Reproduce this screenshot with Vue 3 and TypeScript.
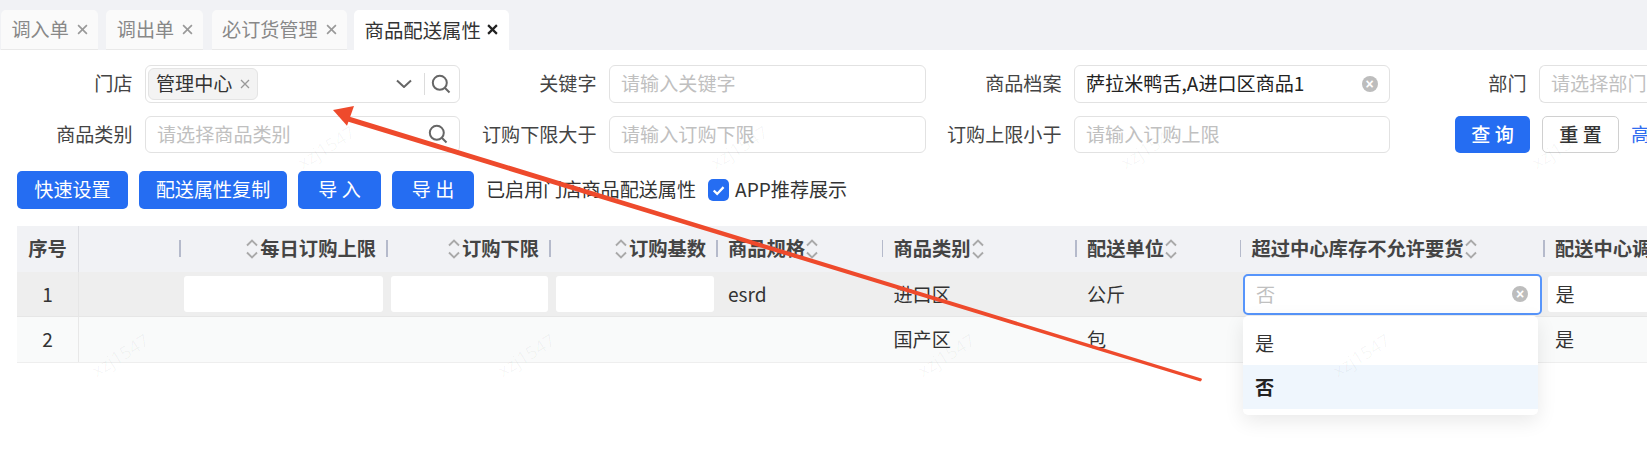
<script setup lang="ts">
interface Head { label: string; align?: 'right'; sort?: 'before' | 'after' }
const heads: Head[] = [
  { label: '每日订购上限', align: 'right', sort: 'before' },
  { label: '订购下限', align: 'right', sort: 'before' },
  { label: '订购基数', align: 'right', sort: 'before' },
  { label: '商品规格', sort: 'after' },
  { label: '商品类别', sort: 'after' },
  { label: '配送单位', sort: 'after' },
  { label: '超过中心库存不允许要货', sort: 'after' },
  { label: '配送中心调' },
]
const marks = [
  [326, 147], [739, 147], [1149, 147], [1560, 147],
  [120, 355], [526, 355], [946, 355], [1361, 355],
]
const tabs = ['调入单', '调出单', '必订货管理']
</script>

<template>
  <div class="page">
    <div class="tabs">
      <div v-for="t in tabs" :key="t" class="tab">
        {{ t }}
        <svg class="x" viewBox="0 0 10 10"><path d="m1 1 8 8M9 1 1 9" /></svg>
      </div>
      <div class="tab active">
        商品配送属性
        <svg class="x" viewBox="0 0 10 10"><path d="m1 1 8 8M9 1 1 9" /></svg>
      </div>
    </div>

    <div class="panel">
      <div class="form">
        <label class="lab">门店</label>
        <div class="field shop">
          <span class="tag">管理中心
            <svg class="tag-x" viewBox="0 0 10 10"><path d="m1 1 8 8M9 1 1 9" /></svg>
          </span>
          <svg class="chev" viewBox="0 0 16 9"><path d="M1 1.500 8 8l7-6.500" /></svg>
          <i class="sep"></i>
          <svg class="search" viewBox="0 0 20 20"><circle cx="8.800" cy="8.800" r="7" /><path d="m14 14 4.500 4.500" /></svg>
        </div>
        <label class="lab">关键字</label>
        <div class="field"><span class="ph">请输入关键字</span></div>
        <label class="lab">商品档案</label>
        <div class="field"><span class="val">萨拉米鸭舌,A进口区商品1</span><i class="clear">×</i></div>
        <label class="lab">部门</label>
        <div class="field open-right"><span class="ph">请选择部门</span></div>

        <label class="lab">商品类别</label>
        <div class="field"><span class="ph">请选择商品类别</span>
          <svg class="search end" viewBox="0 0 20 20"><circle cx="8.800" cy="8.800" r="7" /><path d="m14 14 4.500 4.500" /></svg>
        </div>
        <label class="lab">订购下限大于</label>
        <div class="field"><span class="ph">请输入订购下限</span></div>
        <label class="lab">订购上限小于</label>
        <div class="field"><span class="ph">请输入订购上限</span></div>
        <div class="query">
          <button class="btn primary q">查 询</button>
          <button class="btn plain">重 置</button>
          <a class="more">高</a>
        </div>
      </div>

      <div class="actions">
        <button class="btn primary w110">快速设置</button>
        <button class="btn primary w148">配送属性复制</button>
        <button class="btn primary w83">导 入</button>
        <button class="btn primary w82">导 出</button>
        <span class="enabled">已启用门店商品配送属性</span>
        <span class="check">
          <svg viewBox="0 0 22 22"><path d="m6 11.500 3.600 3.600L16.300 8" /></svg>
        </span>
        <span class="app">APP推荐展示</span>
      </div>

      <div class="table">
        <div class="th seq">序号</div>
        <div class="th fixed-end"></div>
        <div v-for="h in heads" :key="h.label" class="th" :class="{ right: h.align === 'right' }">
          <i class="bar"></i>
          <svg v-if="h.sort === 'before'" class="sort" viewBox="0 0 12 22"><path d="M1 7.500 6 2.500l5 5M1 14.500l5 5 5-5" /></svg>
          <span>{{ h.label }}</span>
          <svg v-if="h.sort === 'after'" class="sort" viewBox="0 0 12 22"><path d="M1 7.500 6 2.500l5 5M1 14.500l5 5 5-5" /></svg>
        </div>

        <div class="td seq r1">1</div>
        <div class="td r1 fixed-end"></div>
        <div class="td r1 edit"><i class="cell-input"></i></div>
        <div class="td r1 edit e2"><i class="cell-input"></i></div>
        <div class="td r1 edit e3"><i class="cell-input"></i></div>
        <div class="td r1 text">esrd</div>
        <div class="td r1 text">进口区</div>
        <div class="td r1 text">公斤</div>
        <div class="td r1 select-cell">
          <div class="focus-select"><span>否</span><i class="clear">×</i></div>
          <div class="menu">
            <div class="opt">是</div>
            <div class="opt on">否</div>
          </div>
        </div>
        <div class="td r1 edit last"><i class="cell-input">是</i></div>

        <div class="td seq r2">2</div>
        <div class="td r2 fixed-end"></div>
        <div class="td r2"></div>
        <div class="td r2"></div>
        <div class="td r2"></div>
        <div class="td r2"></div>
        <div class="td r2 text">国产区</div>
        <div class="td r2 text">包</div>
        <div class="td r2"></div>
        <div class="td r2 text">是</div>
      </div>
    </div>

    <span v-for="m in marks" :key="m[0]" class="mark" :style="{ left: m[0] + 'px', top: m[1] + 'px' }">xzj1547</span>

    <svg class="arrow" viewBox="0 0 1647 461">
      <path class="shaft" d="M345.700 115.400 344.300 120.600 1200.400 381.500Q1202.500 380 1201.500 378.500Z" />
      <path class="head" d="M333 110 354 106 347 125.700Z" />
    </svg>
  </div>
</template>

<style>
html, body { margin: 0; background: #fff; }
</style>

<style scoped>
.page {
  position: relative;
  width: 1647px;
  height: 461px;
  overflow: hidden;
  background: #fff;
  color: #333;
  font: 19.100px/1.3 "Noto Sans CJK SC", "Noto Sans", sans-serif;
}
.tabs {
  display: flex;
  gap: 8.500px;
  height: 39.500px;
  padding: 10px 0 0 1px;
  background: #f1f2f5;
}
.tab {
  display: flex;
  align-items: center;
  justify-content: center;
  gap: 8px;
  padding: 0 10px 0 10.500px;
  background: #fafafa;
  border-radius: 5px 5px 0 0;
  border-bottom: 1px solid #e9e9e9;
  color: #888;
}
.tab .x {
  width: 11px;
  height: 11px;
  fill: none;
  stroke: #999;
  stroke-width: 1.500;
}
.tab.active {
  gap: 6px;
  margin-left: -1.500px;
  background: #fff;
  border-bottom: 0;
  color: #333;
  font-size: 19.400px;
  padding: 0 11px;
}
.tab.active .x { stroke: #222; stroke-width: 2; }
.panel { padding-top: 15.500px; }
.form {
  display: grid;
  grid-template-columns: 145px 315px 149px 316.500px 148.500px 315.500px 149.500px 200px;
  grid-auto-rows: 37.500px;
  row-gap: 13px;
}
.lab {
  display: flex;
  align-items: center;
  justify-content: flex-end;
  padding-right: 12.500px;
  color: #444;
  white-space: nowrap;
}
.field {
  box-sizing: border-box;
  display: flex;
  align-items: center;
  padding: 0 11px;
  border: 1.300px solid #e2e2e2;
  border-radius: 6px;
  background: #fff;
  min-width: 0;
}
.ph { color: #c0c0c0; white-space: nowrap; }
.val { color: #222; white-space: nowrap; }
.open-right { border-right: 0; }
.shop { padding: 0 8px 0 2px; }
.tag {
  display: flex;
  align-items: center;
  justify-content: space-between;
  height: 32px;
  padding: 0 7px 0 7px;
  box-sizing: border-box;
  width: 110px;
  background: #f3f3f3;
  border: 1.300px solid #e4e4e4;
  border-radius: 6px;
  color: #333;
  white-space: nowrap;
}
.tag-x {
  width: 10px;
  height: 10px;
  flex: none;
  fill: none;
  stroke: #999;
  stroke-width: 1.300;
}
.chev {
  margin-left: auto;
  width: 16px;
  height: 9px;
  flex: none;
  fill: none;
  stroke: #666;
  stroke-width: 2;
}
.sep { width: 1px; height: 22px; margin: 0 6px 0 12px; background: #dcdcdc; flex: none; }
.search {
  width: 20px;
  height: 20px;
  fill: none;
  stroke: #666;
  stroke-width: 2;
  flex: none;
}
.search.end { margin-left: auto; }
.clear {
  display: flex;
  align-items: center;
  justify-content: center;
  margin-left: auto;
  width: 16px;
  height: 16px;
  border-radius: 50%;
  background: #bdbdbd;
  color: #fff;
  font: 700 14px/1 "Liberation Sans", sans-serif;
}
.query {
  grid-column: 7 / span 2;
  display: flex;
  align-items: center;
  padding-left: 65.500px;
  white-space: nowrap;
}
.btn {
  box-sizing: border-box;
  height: 37.500px;
  padding: 0;
  border: 0;
  border-radius: 5px;
  font: inherit;
}
.primary { background: #256df2; color: #fff; }
.q { width: 75px; font-weight: 500; }
.plain {
  width: 77px;
  margin-left: 12px;
  background: #fff;
  border: 1.300px solid #d0d0d0;
  color: #333;
  font-weight: 500;
}
.more { margin-left: 12px; color: #2f6cf0; }
.actions {
  display: flex;
  align-items: center;
  gap: 11px;
  height: 37.500px;
  margin: 18px 0 0 17px;
}
.w110 { width: 111px; }
.w148 { width: 148px; }
.w83 { width: 83px; }
.w82 { width: 82px; }
.enabled { color: #333; margin-left: 1px; }
.check {
  display: flex;
  width: 21px;
  height: 22px;
  margin-left: 1px;
  background: #256df2;
  border-radius: 5px;
}
.check svg { fill: none; stroke: #fff; stroke-width: 2.400; }
.app { margin-left: -5px; color: #333; }
.table {
  display: grid;
  grid-template-columns: 62px 100px 207px 163px 167px 165.500px 193.500px 164.500px 303.500px 240px;
  grid-template-rows: 46px 45px 45px;
  margin: 17.500px 0 0 17px;
  width: 1630px;
  border-bottom: 1.500px solid #eee;
}
.th {
  position: relative;
  display: flex;
  align-items: center;
  background: #f1f2f5;
  font-size: 19.300px;
  font-weight: 700;
  color: #444;
  padding-left: 12px;
  white-space: nowrap;
}
.th.right { justify-content: flex-end; padding-right: 10px; }
.bar {
  position: absolute;
  left: 0;
  top: 13.500px;
  width: 1.800px;
  height: 17px;
  background: #b5bacb;
}
.seq {
  justify-content: center;
  padding: 0;
  border-right: 1.500px solid #dcdde2;
  text-align: center;
  box-sizing: border-box;
}
.sort {
  width: 12px;
  height: 22px;
  margin: 0 1px;
  flex: none;
  fill: none;
  stroke: #a9a9a9;
  stroke-width: 1.900;
}
.th.right .sort { margin-right: 2px; }
.td {
  position: relative;
  display: flex;
  align-items: center;
  color: #333;
  min-width: 0;
}
.r1 { background: #eeeeee; border-bottom: 1px solid #e6e6e6; box-sizing: border-box; }
.r2 { background: #f9fafa; }
.text { padding-left: 12px; }
.r1.seq { border-right: 1px solid #e6e6e6; }
.r2.seq { border-right: 1px solid #e8e8e8; }
.edit { padding: 0 3px 0 5px; }
.edit.e2 { padding: 0 1px 0 5px; }
.edit.e3 { padding: 0 2px 0 7px; }
.cell-input {
  display: flex;
  align-items: center;
  width: 100%;
  height: 36.500px;
  padding-left: 8px;
  box-sizing: border-box;
  background: #fff;
  border-radius: 3px;
  font-style: normal;
  color: #333;
}
.last { padding-right: 0; padding-left: 4.500px; }
.select-cell { overflow: visible; }
.focus-select {
  position: absolute;
  left: 3.500px;
  top: 2px;
  box-sizing: border-box;
  display: flex;
  align-items: center;
  width: 299px;
  height: 40.500px;
  padding: 0 12px 0 11px;
  background: #fff;
  border: 2px solid #5795fb;
  border-radius: 5px;
  color: #c0c0c0;
  z-index: 2;
}
.menu {
  position: absolute;
  left: 3.500px;
  top: 43.700px;
  box-sizing: border-box;
  width: 295px;
  height: 99px;
  padding-top: 5.300px;
  background: #fff;
  border-radius: 5px;
  box-shadow: 0 6px 20px rgba(0, 0, 0, .09);
  z-index: 3;
}
.opt {
  display: flex;
  align-items: center;
  height: 44px;
  padding-left: 12px;
  color: #333;
}
.opt.on {
  background: #eff6fd;
  color: #222;
  font-weight: 700;
}
.mark {
  position: absolute;
  transform: translate(-50%, -50%) rotate(-32deg);
  color: rgba(0, 0, 0, .035);
  font: 18px "Noto Sans", sans-serif;
  pointer-events: none;
  z-index: 4;
}
.arrow {
  position: absolute;
  left: 0;
  top: 0;
  width: 1647px;
  height: 461px;
  z-index: 5;
  pointer-events: none;
}
.shaft, .head { fill: #ee4a2c; }
</style>
